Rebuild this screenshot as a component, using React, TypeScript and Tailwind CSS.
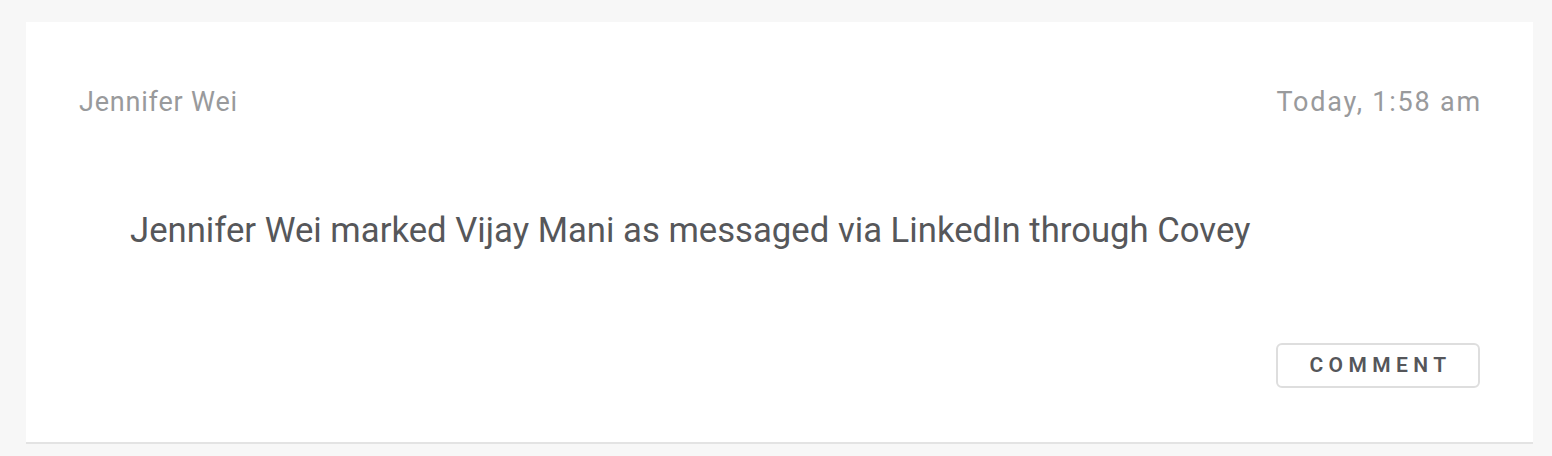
export default function App() {
  return (
    <div className="min-h-[456px] w-full bg-[#f7f7f7] pt-[22px] pl-[26px] pr-[19px] font-['Roboto',sans-serif]">
      <div className="bg-white border-b-2 border-[#e3e3e3] px-[53px] pt-[64px] pb-[54px]">
        <div className="flex items-center justify-between">
          <span className="text-[27px] leading-[32px] tracking-[0.8px] text-[#999a9c]">Jennifer Wei</span>
          <span className="-mr-[2px] text-[27px] leading-[32px] tracking-[1.8px] text-[#999a9c]">Today, 1:58 am</span>
        </div>
        <p className="mt-[92px] pl-[51px] text-[34.7px] leading-[40px] text-[#56575a]">
          Jennifer Wei marked Vijay Mani as messaged via LinkedIn through Covey
        </p>
        <div className="mt-[93px] flex justify-end">
          <button className="h-[45px] w-[204px] rounded-[6px] border-2 border-[#dedede] pl-[5px] text-[21px] font-semibold tracking-[5.4px] text-[#55565a]">
            COMMENT
          </button>
        </div>
      </div>
    </div>
  );
}
